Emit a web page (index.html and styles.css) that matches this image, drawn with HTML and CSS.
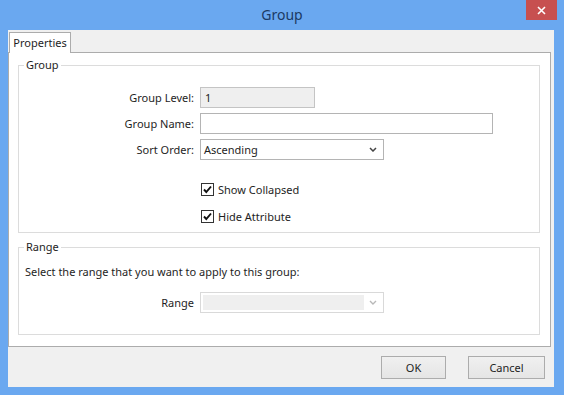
FILE: index.html
```html
<!DOCTYPE html>
<html lang="en">
<head>
    <meta charset="UTF-8">
    <title>Group</title>
    <link rel="stylesheet" href="styles.css">
</head>
<body>

    <div class="window">
        <div class="titlebar">
            <span></span>
            <div class="title">Group</div>
            <div class="close">
                <svg width="9" height="9" viewBox="0 0 9 9"><path d="M1 1L8 8M8 1L1 8" stroke="#fff" stroke-width="1.6"/></svg>
            </div>
        </div>

        <div class="client">
            <div class="tabs">
                <div class="tab">Properties</div>
            </div>

            <div class="panel">
                <!-- Group section -->
                <fieldset class="box group-box">
                    <legend>Group</legend>
                    <div class="form-grid">
                        <label>Group Level:</label>
                        <div class="field field-level disabled">1</div>
                        <label>Group Name:</label>
                        <div class="field field-name"></div>
                        <label>Sort Order:</label>
                        <div class="field field-select">
                            <span>Ascending</span>
                            <svg class="chevron" width="8" height="5" viewBox="0 0 8 5"><path d="M1 1L4 4L7 1" fill="none" stroke="#444" stroke-width="1.5"/></svg>
                        </div>
                    </div>
                    <div class="checks">
                        <div class="check-row">
                            <span class="checkbox"><svg width="11" height="11" viewBox="0 0 11 11"><path d="M2 5.5L4.3 8L9 2.5" fill="none" stroke="#111" stroke-width="1.9"/></svg></span>
                            <span>Show Collapsed</span>
                        </div>
                        <div class="check-row">
                            <span class="checkbox"><svg width="11" height="11" viewBox="0 0 11 11"><path d="M2 5.5L4.3 8L9 2.5" fill="none" stroke="#111" stroke-width="1.9"/></svg></span>
                            <span>Hide Attribute</span>
                        </div>
                    </div>
                </fieldset>

                <!-- Range section -->
                <fieldset class="box range-box">
                    <legend>Range</legend>
                    <p class="hint">Select the range that you want to apply to this group:</p>
                    <div class="form-grid range-grid">
                        <label>Range</label>
                        <div class="field field-select disabled-select">
                            <span class="select-fill"></span>
                            <svg class="chevron" width="8" height="5" viewBox="0 0 8 5"><path d="M1 1L4 4L7 1" fill="none" stroke="#b8b8b8" stroke-width="1.4"/></svg>
                        </div>
                    </div>
                </fieldset>
            </div>

            <div class="buttons">
                <button class="btn btn-ok">OK</button>
                <button class="btn btn-cancel">Cancel</button>
            </div>
        </div>
    </div>

</body>
</html>
```

FILE: styles.css
```css
body {
    margin: 0;
    font-family: 'Noto Sans', 'DejaVu Sans', sans-serif;
    font-size: 11px;
    color: #1e1e1e;
    background: #6aa8f0;
}

.window {
    width: 564px;
    height: 395px;
    background: #6aa8f0;
    overflow: hidden;
}

/* Title bar */
.titlebar {
    display: grid;
    grid-template-columns: 1fr auto 1fr;
    height: 30px;
}

.title {
    font-size: 14px;
    line-height: 30px;
    color: #1b3a64;
}

.close {
    justify-self: end;
    align-self: start;
    width: 31px;
    height: 20px;
    margin-right: 7px;
    background: #c75050;
    display: flex;
    align-items: center;
    justify-content: center;
}

/* Client area */
.client {
    margin: 0 10px 0 8px;
    height: 357px;
    background: #f0f0f0;
}

.tabs {
    height: 22px;
    padding-top: 2px;
    box-sizing: border-box;
}

.tab {
    position: relative;
    z-index: 1;
    width: 62px;
    height: 21px;
    margin-left: 1px;
    box-sizing: border-box;
    border: 1px solid #acacac;
    border-bottom: none;
    background: #fff;
    text-align: center;
    line-height: 19px;
    font-size: 11px;
}

.panel {
    height: 295px;
    box-sizing: border-box;
    margin-right: 3px;
    border: 1px solid #acacac;
    background: #fff;
    padding-top: 5px;
}

/* Sections */
.box {
    margin: 0 10px 0 9px;
    padding: 0;
    border: 1px solid #dcdcdc;
    min-width: 0;
}

.box legend {
    margin-left: 5px;
    padding: 0 2px;
    line-height: 14px;
}

.group-box {
    padding-bottom: 9px;
}

.form-grid {
    display: grid;
    grid-template-columns: 175px auto;
    column-gap: 6px;
    row-gap: 5px;
    margin-top: 15px;
    justify-items: start;
}

.form-grid label {
    justify-self: end;
    line-height: 21px;
}

.field {
    height: 21px;
    box-sizing: border-box;
    border: 1px solid #b4b4b4;
    background: #fff;
    padding: 0 4px;
    line-height: 19px;
}

.field-level {
    width: 115px;
}

.disabled {
    background: #efefef;
    border-color: #c4c4c4;
}

.field-name {
    width: 293px;
}

.field-select {
    width: 184px;
    display: flex;
    align-items: center;
    justify-content: space-between;
    padding: 0 6px 0 3px;
}

.chevron {
    display: block;
}

/* Checkboxes */
.checks {
    margin: 23px 0 0 182px;
    display: flex;
    flex-direction: column;
    gap: 14px;
}

.check-row {
    display: flex;
    align-items: center;
    gap: 4px;
    height: 13px;
}

.checkbox {
    width: 13px;
    height: 13px;
    box-sizing: border-box;
    border: 1px solid #333;
    background: #fff;
    display: flex;
    align-items: center;
    justify-content: center;
}

/* Range section */
.range-box {
    margin-top: 7px;
    padding-bottom: 21px;
}

.hint {
    margin: 10px 0 0 6px;
    line-height: 16px;
}

.range-grid {
    margin-top: 12px;
}

.disabled-select {
    border-color: #d9d9d9;
    padding: 2px 6px 2px 2px;
    align-items: stretch;
}

.select-fill {
    width: 161px;
    background: #efefef;
}

.disabled-select .chevron {
    align-self: center;
}

/* Buttons */
.buttons {
    display: flex;
    justify-content: flex-end;
    gap: 22px;
    padding: 9px 9px 0 0;
}

.btn {
    height: 23px;
    border: 1px solid #acacac;
    background: linear-gradient(#f0f0f0, #e5e5e5);
    font-family: 'Noto Sans', 'DejaVu Sans', sans-serif;
    font-size: 11px;
    color: #1e1e1e;
    padding: 0;
}

.btn-ok {
    width: 65px;
}

.btn-cancel {
    width: 77px;
}
```
